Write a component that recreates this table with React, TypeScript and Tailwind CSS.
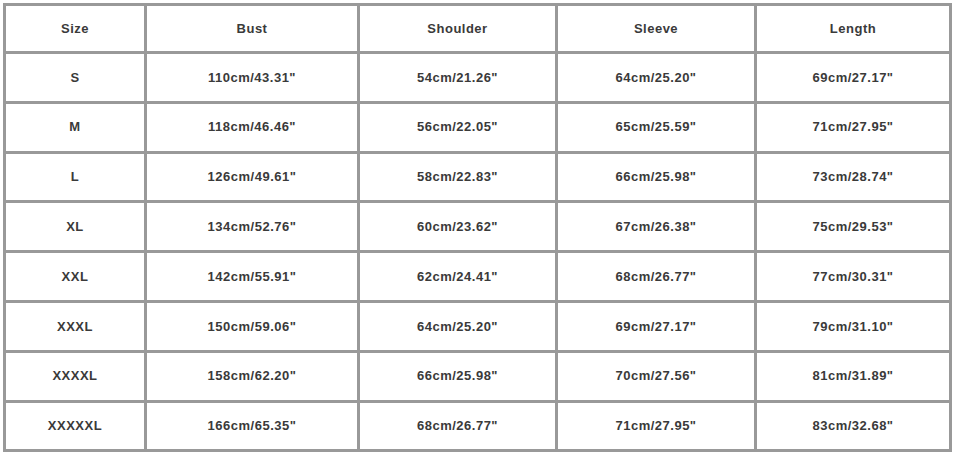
const headers = ['Size', 'Bust', 'Shoulder', 'Sleeve', 'Length']

const rows = [
  ['S', '110cm/43.31"', '54cm/21.26"', '64cm/25.20"', '69cm/27.17"'],
  ['M', '118cm/46.46"', '56cm/22.05"', '65cm/25.59"', '71cm/27.95"'],
  ['L', '126cm/49.61"', '58cm/22.83"', '66cm/25.98"', '73cm/28.74"'],
  ['XL', '134cm/52.76"', '60cm/23.62"', '67cm/26.38"', '75cm/29.53"'],
  ['XXL', '142cm/55.91"', '62cm/24.41"', '68cm/26.77"', '77cm/30.31"'],
  ['XXXL', '150cm/59.06"', '64cm/25.20"', '69cm/27.17"', '79cm/31.10"'],
  ['XXXXL', '158cm/62.20"', '66cm/25.98"', '70cm/27.56"', '81cm/31.89"'],
  ['XXXXXL', '166cm/65.35"', '68cm/26.77"', '71cm/27.95"', '83cm/32.68"'],
]

export default function App() {
  return (
    <div className="w-[956px] h-[456px] bg-white pt-[3px] pl-[3px]">
      <div
        className="grid w-[949px] bg-[#999] p-[3px] gap-[3px] grid-cols-[138px_210px_195px_196px_192px] grid-rows-[45px_repeat(8,46.8px)] text-[13px] font-bold tracking-[0.5px] text-[#3a3a3a]"
        style={{ fontFamily: '"Liberation Sans", Arial, sans-serif' }}
      >
        {headers.map((h) => (
          <div key={h} className="bg-white flex items-center justify-center">
            {h}
          </div>
        ))}
        {rows.map((r) =>
          r.map((c, i) => (
            <div key={r[0] + i} className="bg-white flex items-center justify-center">
              {c}
            </div>
          ))
        )}
      </div>
    </div>
  )
}
